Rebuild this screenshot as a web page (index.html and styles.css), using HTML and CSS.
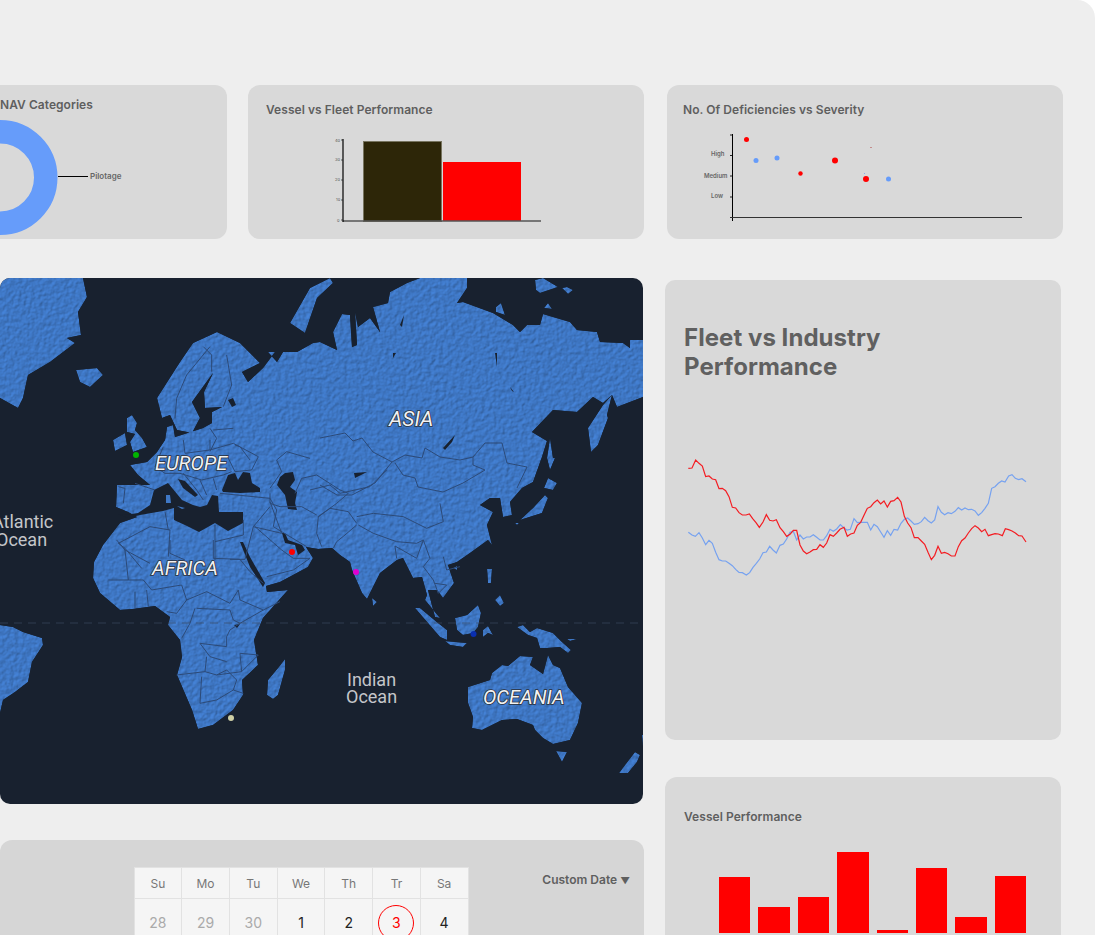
FILE: index.html
```html
<!DOCTYPE html>
<html lang="en">
<head>
    <meta charset="UTF-8">
    <meta name="viewport" content="width=device-width, initial-scale=1.0">
    <title>Fleet Dashboard</title>
    <link rel="stylesheet" href="styles.css">
</head>
<body>
    <div class="page">
        <div class="top-row">
            <div class="card nav-card">
                <h3 class="card-title">NAV Categories</h3>
                <svg class="donut" viewBox="0 120 130 116" width="130" height="116">
                    <circle cx="0" cy="177.5" r="45.75" fill="none" stroke="#669cfa" stroke-width="23.5"/>
                    <path d="M58 176.5H88" stroke="#000" stroke-width="1"/>
                    <text x="90" y="179" class="chart-label">Pilotage</text>
                </svg>
            </div>

            <div class="card fleet-card">
                <h3 class="card-title">Vessel vs Fleet Performance</h3>
                <svg class="fleet-chart" viewBox="330 135 215 90" width="215" height="90">
                    <rect x="363.5" y="141.5" width="78" height="80" fill="#2d2608" stroke="#77745f" stroke-width="1"/>
                    <rect x="443" y="162" width="78" height="59" fill="#f00"/>
                    <path d="M343 221H541" stroke="#555" stroke-width="1.6"/>
                    <path d="M343 139V222" stroke="#000" stroke-width="1.2"/>
                    <path d="M341 140H343M341 160H343M341 180H343M341 200H343M341 220H343" stroke="#222" stroke-width=".7"/>
                    <text x="335" y="141.5" class="tick">40</text>
                    <text x="335" y="161" class="tick">30</text>
                    <text x="335" y="181" class="tick">20</text>
                    <text x="336" y="201" class="tick">10</text>
                    <text x="337" y="221.5" class="tick">0</text>
                </svg>
            </div>

            <div class="card severity-card">
                <h3 class="card-title">No. Of Deficiencies vs Severity</h3>
                <svg class="severity-chart" viewBox="700 130 330 95" width="330" height="95">
                    <path d="M732.5 134V221" stroke="#000" stroke-width="1"/>
                    <path d="M730 217.5H1022" stroke="#333" stroke-width="1"/>
                    <path d="M730 135H732M730 155.5H732M730 176H732M730 197H732" stroke="#222" stroke-width="1"/>
                    <text x="711" y="156" class="axis-label">High</text>
                    <text x="704" y="178" class="axis-label">Medium</text>
                    <text x="711" y="198" class="axis-label">Low</text>
                    <circle cx="746.5" cy="139.5" r="2.5" fill="#f00"/>
                    <circle cx="756" cy="160.5" r="2.5" fill="#669cfa"/>
                    <circle cx="777" cy="158" r="2.5" fill="#669cfa"/>
                    <circle cx="800.5" cy="173.5" r="2.2" fill="#f00"/>
                    <circle cx="835" cy="160.5" r="3" fill="#f00"/>
                    <circle cx="866" cy="179" r="3" fill="#f00"/>
                    <circle cx="888.5" cy="179" r="2.5" fill="#669cfa"/>
                    <circle cx="871" cy="147.5" r=".6" fill="#a33"/>
                    <circle cx="864.5" cy="173.5" r=".5" fill="#669cfa"/>
                </svg>
            </div>
        </div>

        <div class="lower">
            <div class="left-col">
                <div class="map">
                    <svg viewBox="0 278 643 526" width="643" height="526">
                        <defs>
                            <filter id="relief" x="0" y="0" width="100%" height="100%" color-interpolation-filters="sRGB">
                                <feTurbulence type="fractalNoise" baseFrequency=".24" numOctaves="3" seed="7" result="noise"/>
                                <feDiffuseLighting in="noise" surfaceScale=".65" diffuseConstant="1" lighting-color="#fff" result="light">
                                    <feDistantLight azimuth="225" elevation="60"/>
                                </feDiffuseLighting>
                                <feComposite in="light" in2="SourceGraphic" operator="arithmetic" k1="1.14" result="lit"/>
                                <feComposite in="lit" in2="SourceAlpha" operator="in"/>
                            </filter>
                        </defs>

                        <g class="land" filter="url(#relief)">
                            <!-- eurasia + africa -->
                            <polygon points="128,512 137,517 120,523 103,545 94,562 93,578 100,593 120,610 133,609 155,606 170,617 168,625 180,640 182,657 177,675 192,710 198,729 213,725 233,710 243,695 242,680 258,665 254,640 263,618 288,590 267,592 266,586 280,582 308,567 313,558 306,547 318,549 332,548 340,555 350,562 352,570 362,593 367,599 373,587 380,573 397,560 403,558 413,578 422,577 427,595 425,600 440,618 435,617 428,590 437,590 443,598 454,583 448,565 457,562 470,553 488,540 492,545 487,525 493,512 480,505 490,498 500,498 503,517 512,515 510,502 522,488 533,482 542,457 547,441 532,432 553,410 577,412 593,397 603,403 612,395 617,407 643,397 643,340 630,340 630,348 623,343 600,342 597,332 577,330 570,322 543,314 540,325 527,325 520,332 513,325 493,313 463,302 457,303 467,288 467,278 420,278 407,283 390,292 388,303 373,307 380,332 370,318 358,327 355,312 357,345 352,347 350,315 342,314 333,332 337,350 320,342 313,343 297,352 283,352 277,362 268,352 275,352 263,368 248,382 242,372 260,363 240,343 217,332 193,343 180,362 157,398 162,418 170,415 177,430 192,433 200,418 192,402 213,373 204,392 205,408 222,407 212,412 212,423 203,428 175,437 173,425 167,427 165,440 157,452 147,462 130,465 138,475 150,485 117,485 116,507"/>
                            <!-- greenland, iceland, british isles -->
                            <polygon points="0,278 83,278 87,297 78,312 81,335 67,338 75,343 50,362 28,375 23,398 18,408 0,398"/>
                            <polygon points="76,370 97,368 103,375 90,387 80,382"/>
                            <polygon points="113,440 125,433 127,445 115,451"/>
                            <polygon points="127,418 132,415 137,423 135,430 142,438 147,447 133,452 130,442 135,434 127,432"/>
                            <!-- arctic -->
                            <polygon points="290,323 310,288 330,278 333,283 317,298 305,333"/>
                            <polygon points="535,280 543,278 558,287 540,293 536,290"/>
                            <polygon points="562,288 567,287 573,290 568,294"/>
                            <polygon points="496,307 501,303 505,315 496,312"/>
                            <polygon points="544,308 548,303 552,309"/>
                            <!-- east coast islands -->
                            <polygon points="550,438 553,458 555,458 550,470 547,458"/>
                            <polygon points="612,395 607,415 608,418 598,445 591,452 588,428 603,405"/>
                            <polygon points="548,478 557,483 553,490 544,488"/>
                            <polygon points="545,495 548,498 542,513 520,520 533,508"/>
                            <polygon points="515,523 519,523 517,525"/>
                            <!-- south east asia -->
                            <polygon points="372,598 377,602 373,606"/>
                            <polygon points="453,568 457,566 457,570"/>
                            <polygon points="487,569 492,569 491,583 488,583"/>
                            <polygon points="495,600 500,595 504,603 500,606"/>
                            <polygon points="415,608 420,608 438,623 447,630 447,640 440,637"/>
                            <polygon points="445,641 467,643 463,647 450,645"/>
                            <polygon points="455,618 467,615 478,605 481,613 478,627 473,633 463,635 457,630"/>
                            <polygon points="483,630 488,626 493,635 488,633 483,637"/>
                            <polygon points="517,627 523,625 530,632 537,628 553,633 562,642 571,650 568,653 560,647 547,648 540,648 537,638 528,635"/>
                            <polygon points="567,639 577,639 570,641"/>
                            <!-- oceania -->
                            <polygon points="468,687 490,680 492,673 502,665 508,666 520,656 533,657 530,665 543,674 548,655 553,665 560,668 568,687 582,703 578,723 570,740 553,744 543,738 535,730 533,725 517,719 502,720 482,730 472,728 473,717 468,703"/>
                            <polygon points="556,751 567,752 562,762"/>
                            <polygon points="642,735 643,735 643,748"/>
                            <polygon points="635,752 640,755 637,762 628,773 619,773 625,765"/>
                            <!-- madagascar, south america -->
                            <polygon points="285,659 285,670 278,695 273,699 267,695 268,680 278,668"/>
                            <polygon points="0,625 13,627 23,632 42,638 43,645 32,662 28,682 15,692 3,700 0,713"/>
                        </g>

                        <g class="water">
                            <polygon points="118,514 125,515 138,513 150,505 154,490 168,483 182,500 193,505 200,507 207,505 212,495 218,496 219,512 243,512 243,523 228,531 215,523 199,532 187,526 174,520 174,508 163,511 140,515 128,518"/>
                            <polygon points="178,479 185,481 198,495 195,497 183,488"/>
                            <polygon points="222,490 228,475 235,473 238,480 243,472 250,473 252,483 260,488 260,492 240,493 223,492"/>
                            <polygon points="285,473 293,472 295,480 290,487 297,492 295,503 297,510 288,509 285,495 277,485 280,477"/>
                            <polygon points="240,542 243,542 250,557 265,583 263,587 250,567"/>
                            <polygon points="282,533 285,533 288,540 302,545 305,550 298,555 295,545 285,543"/>
                            <polygon points="228,400 233,398 236,405 232,407"/>
                            <polygon points="234,625 240,624 237,628"/>
                            <polygon points="354,473 367,472 355,478"/>
                            <polygon points="443,448 455,435 452,442 445,450"/>
                            <polygon points="495,353 497,353 497,367"/>
                            <polygon points="510,387 514,392 512,391"/>
                            <polygon points="393,353 396,353 393,358"/>
                            <polygon points="400,325 404,315 402,327"/>
                        </g>

                        <g class="land">
                            <polygon points="166,495 170,495 171,503 166,503"/>
                            <polygon points="177,506 185,508 182,509"/>
                        </g>

                        <g class="borders">
                            <!-- north asia -->
                            <path d="M320 438L345 433 353 441 362 438 373 452 392 462 405 455 422 458 425 448 440 457 460 460 473 457 485 443 502 443 507 463 527 467 517 488M395 463L403 475 415 478 418 487 443 492 463 483 485 470 473 465 473 457M320 485L337 495 352 495 375 483 392 462"/>
                            <!-- africa -->
                            <g transform="translate(0 540) scale(.3333)">
                                <path d="M350 0L375 30 385 120M375 30L450 70M510 0L510 40 555 60M640 0L640 55 720 58 750 95 790 130M325 120L385 120 430 120 455 150 545 135 560 180 620 155 690 190 715 150 720 180 790 210 840 185M405 155L405 205M440 150L445 200M560 180L530 220 500 215M590 205L690 210 700 240 720 250 790 210M585 205L570 250 545 295M720 250L690 270 680 290 680 320 600 310 630 350 680 365M620 350L615 395 530 405M615 395L650 405 725 395 775 345 720 340 725 395M605 410L600 490 650 480 700 450 730 460M650 405L680 390 710 420 700 450"/>
                            </g>
                            <!-- middle east and south asia -->
                            <g transform="translate(230 470) scale(.3333)">
                                <path d="M0 268L45 268 70 170 120 110M70 170L155 190 120 95M265 140L260 190 275 230M265 140L300 115 355 125 380 160M380 165L345 195 320 215 310 235M385 165L430 190 500 215 560 220 580 210 560 265 495 228 500 265M580 210L600 265 580 290 610 330 625 370 650 345 615 340M75 170L155 240 190 265 240 265 190 300 110 320M215 25L260 15 330 60 355 70 320 100 265 140M195 70L215 25M240 60L300 45 330 70 420 50 470 0M120 70L120 100 150 110 215 110 260 135M380 140L430 130 520 140 590 175 640 155 630 100M640 260L650 300 690 290"/>
                            </g>
                            <!-- europe and north africa -->
                            <g transform="translate(100 440) scale(.3333)">
                                <path d="M250 0L255 40 330 30 330 0M190 20L165 80 195 100 240 100 305 120 370 105 395 95M330 30L400 10 475 50 455 90 405 95 380 45M405 15L420 20 450 60M55 140L75 145 70 190M105 130L165 150M360 160L510 175M510 175L530 210 520 260 620 320M55 310L75 325 125 385M55 310L150 260 210 270 205 350M195 215L205 270M345 255L345 360M430 240L430 285 345 305M530 60L560 35 630 55M530 60L545 95 510 145M250 100L290 150 310 180M300 120L320 165M340 115L350 150"/>
                            </g>
                            <!-- scandinavia -->
                            <g transform="translate(0 275) scale(.3333)">
                                <path d="M630 215L560 300 530 370 525 430M680 240L695 330 670 395M610 215L635 240 635 290M630 460L650 490 630 530M700 460L640 465"/>
                            </g>
                        </g>

                        <path class="equator" d="M0 623H643"/>

                        <circle cx="136" cy="455" r="3" fill="#00b400"/>
                        <circle cx="292" cy="552" r="3" fill="#f00"/>
                        <circle cx="356" cy="572" r="3" fill="#e000d0"/>
                        <circle cx="473.5" cy="634" r="3" fill="#0a2fb0"/>
                        <circle cx="231" cy="718" r="3" fill="#cfcfa5"/>

                        <text x="155" y="470" class="continent">EUROPE</text>
                        <text x="389" y="426" class="continent small">ASIA</text>
                        <text x="152" y="575" class="continent">AFRICA</text>
                        <text x="483" y="704" class="continent">OCEANIA</text>

                        <text x="-8" y="528" class="ocean-name">Atlantic</text>
                        <text x="-4" y="546" class="ocean-name">Ocean</text>
                        <text x="347" y="686" class="ocean-name">Indian</text>
                        <text x="346" y="703" class="ocean-name">Ocean</text>
                    </svg>
                </div>

                <div class="card calendar-card">
                    <div class="calendar">
                        <div class="cal-head">Su</div>
                        <div class="cal-head">Mo</div>
                        <div class="cal-head">Tu</div>
                        <div class="cal-head">We</div>
                        <div class="cal-head">Th</div>
                        <div class="cal-head">Tr</div>
                        <div class="cal-head">Sa</div>
                        <div class="cal-day muted">28</div>
                        <div class="cal-day muted">29</div>
                        <div class="cal-day muted">30</div>
                        <div class="cal-day">1</div>
                        <div class="cal-day">2</div>
                        <div class="cal-day"><span class="today">3</span></div>
                        <div class="cal-day">4</div>
                    </div>
                    <div class="date-select">Custom Date <span class="caret">▼</span></div>
                </div>
            </div>

            <div class="right-col">
                <div class="card industry-card">
                    <h2 class="big-title">Fleet vs Industry Performance</h2>
                    <svg class="line-chart" viewBox="0 0 1140 450" width="380" height="150">
                        <polyline fill="none" stroke="#76a2f0" stroke-width="3.6" points="55,277 66,285 76,289 87,278 97,294 107,314 117,301 127,310 137,337 147,359 157,363 167,363 177,370 187,377 197,388 207,397 217,398 229,405 239,398 249,382 259,370 269,357 279,338 289,336 299,319 309,330 319,339 330,316 340,312 350,297 360,277 370,274 380,300 390,285 400,297 410,291 420,291 430,284 440,292 450,300 460,300 470,287 480,268 490,274 500,267 511,254 521,263 531,270 541,268 552,236 562,248 572,247 582,247 592,247 602,270 612,253 622,260 632,276 642,292 652,272 662,286 672,268 683,270 693,250 703,238 713,234 723,243 733,253 744,251 754,245 764,232 774,242 784,249 794,240 804,200 814,217 824,224 834,218 844,221 855,214 865,203 875,210 885,204 895,209 905,208 915,213 925,226 935,218 945,205 955,190 965,145 975,140 985,130 995,123 1005,126 1016,108 1026,104 1036,115 1046,119 1056,116 1068,125"/>
                        <polyline fill="none" stroke="#f41c22" stroke-width="3.6" points="55,85 66,84 77,60 87,70 97,78 107,110 117,108 127,117 137,119 147,146 157,145 167,152 177,170 187,202 197,204 207,218 217,225 228,225 238,222 248,236 258,248 268,262 279,246 289,224 299,241 309,243 319,239 330,263 340,275 350,289 360,283 370,271 380,271 390,315 400,333 410,341 420,336 430,329 440,328 450,314 460,322 470,309 480,284 490,289 500,279 510,268 522,262 532,289 542,282 552,279 562,256 572,247 582,226 592,205 602,200 612,188 622,180 632,192 642,183 652,201 662,184 672,182 683,172 693,186 703,229 713,249 723,263 733,293 744,293 754,303 764,313 774,337 784,359 794,346 804,319 814,340 824,337 834,341 844,348 855,348 865,320 875,302 885,294 895,279 905,266 915,257 925,264 935,275 945,268 955,287 965,284 975,281 985,282 997,287 1006,266 1016,269 1026,273 1036,279 1046,287 1056,288 1068,306"/>
                    </svg>
                </div>

                <div class="card vessel-card">
                    <h3 class="card-title">Vessel Performance</h3>
                    <div class="bars">
                        <div class="bar" style="height: 56px"></div>
                        <div class="bar" style="height: 26px"></div>
                        <div class="bar" style="height: 36px"></div>
                        <div class="bar" style="height: 81px"></div>
                        <div class="bar" style="height: 3px"></div>
                        <div class="bar" style="height: 65px"></div>
                        <div class="bar" style="height: 16px"></div>
                        <div class="bar" style="height: 57px"></div>
                    </div>
                </div>
            </div>
        </div>
    </div>
</body>
</html>
```

FILE: styles.css
```css
body {
    margin: 0;
    background-color: #fff;
    font-family: Inter, "Liberation Sans", sans-serif;
}
.page {
    width: 1095px;
    height: 935px;
    overflow: hidden;
    background-color: #eeeeee;
    border-top-right-radius: 18px;
}
svg {
    display: block;
}
.card {
    background-color: #d9d9d9;
    border-radius: 12px;
}
.card-title {
    margin: 0;
    font-size: 12px;
    line-height: 15px;
    font-weight: 600;
    letter-spacing: .05px;
    color: #5f5f5f;
}

/* top row */
.top-row {
    display: flex;
    padding-top: 85px;
}
.top-row .card {
    height: 154px;
}
.nav-card {
    width: 227px;
    padding-top: 11.5px;
    box-sizing: border-box;
    border-radius: 0 12px 12px 0;
    overflow: hidden;
}
.donut {
    margin-top: 8.5px;
}
.chart-label {
    font-size: 8px;
    font-weight: 600;
    fill: #666;
}
.fleet-card {
    width: 396px;
    margin-left: 21px;
    padding: 17px 0 0 18px;
    box-sizing: border-box;
}
.fleet-chart {
    margin: 18px 0 0 64px;
}
.tick {
    font-size: 4px;
    fill: #555;
}
.severity-card {
    width: 396px;
    margin-left: 23px;
    padding: 17px 0 0 16px;
    box-sizing: border-box;
}
.severity-chart {
    margin: 13px 0 0 17px;
}
.axis-label {
    font-size: 6px;
    font-weight: 600;
    fill: #666;
}

/* lower part */
.lower {
    display: flex;
}
.left-col {
    width: 644px;
    margin-top: 39px;
}
.right-col {
    width: 396px;
    margin: 41px 0 0 21px;
}

/* map */
.map {
    width: 643px;
    height: 526px;
    overflow: hidden;
    background-color: #18212f;
    border-radius: 10px;
}
.land polygon {
    fill: #3f78c6;
}
.water polygon {
    fill: #18212f;
}
.borders path {
    fill: none;
    stroke: #2c4a78;
    stroke-width: 1;
    vector-effect: non-scaling-stroke;
}
.equator {
    fill: none;
    stroke: #3a4a63;
    stroke-opacity: .65;
    stroke-width: 1;
    stroke-dasharray: 8 6;
}
.continent {
    font-family: Roboto, sans-serif;
    font-style: italic;
    font-size: 20px;
    fill: #f2f2f2;
    stroke: #2a2f38;
    stroke-width: 1.6px;
    paint-order: stroke;
}
.continent.small {
    font-size: 21px;
}
.ocean-name {
    font-family: Roboto, sans-serif;
    font-size: 18px;
    fill: #c4c6ca;
}

/* calendar */
.calendar-card {
    display: flex;
    justify-content: space-between;
    width: 644px;
    height: 120px;
    margin-top: 36px;
    padding: 27px 14px 0 133.5px;
    box-sizing: border-box;
    background-color: #d6d6d6;
    border-radius: 12px 12px 0 0;
}
.calendar {
    display: grid;
    grid-template-columns: repeat(7, 1fr);
    grid-template-rows: 30px 47px;
    gap: 1px;
    width: 335px;
    padding: 1px;
    box-sizing: border-box;
    background-color: #e2e2e2;
}
.cal-head, .cal-day {
    display: flex;
    align-items: center;
    justify-content: center;
    background-color: #f5f5f5;
}
.cal-head {
    font-size: 12px;
    color: #777;
}
.cal-day {
    font-size: 14px;
    color: #222;
}
.cal-day.muted {
    color: #aaa;
}
.today {
    display: flex;
    align-items: center;
    justify-content: center;
    width: 34px;
    height: 34px;
    border: 1px solid #f00;
    border-radius: 50%;
    color: #f00;
}
.date-select {
    margin-top: 5px;
    font-size: 12px;
    line-height: 15px;
    font-weight: 600;
    color: #5f5f5f;
}
.caret {
    font-size: 9.5px;
}

/* right side */
.industry-card {
    height: 460px;
    padding: 42.5px 19px 0;
    box-sizing: border-box;
    border-radius: 10px;
}
.big-title {
    width: 230px;
    margin: 0;
    font-size: 24px;
    line-height: 29px;
    font-weight: 700;
    letter-spacing: .05px;
    color: #606060;
}
.line-chart {
    margin: 59.5px 0 0 -14px;
}
.vessel-card {
    height: 200px;
    margin-top: 37px;
    padding: 31.5px 19px 0;
    box-sizing: border-box;
    border-radius: 12px;
}
.bars {
    display: flex;
    align-items: flex-end;
    gap: 8px;
    height: 109.5px;
    margin-left: 35px;
}
.bar {
    width: 31.4px;
    background-color: #f00;
}
```
